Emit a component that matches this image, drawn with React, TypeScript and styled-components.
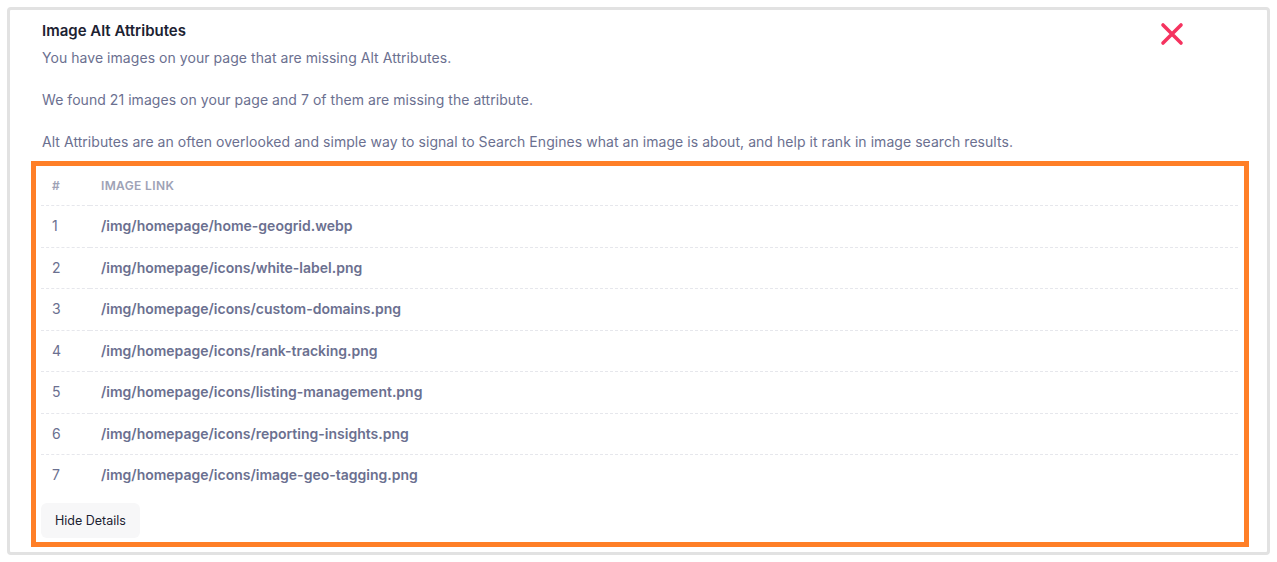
import React from "react";
import styled, { createGlobalStyle } from "styled-components";

const GlobalStyle = createGlobalStyle`
  * { box-sizing: border-box; }
  html, body { margin: 0; padding: 0; background: #ffffff; }
  body { font-family: Inter, "Noto Sans", sans-serif; -webkit-font-smoothing: antialiased; }
`;

const Page = styled.div`
  padding: 7px;
  width: 1277px;
`;

const Card = styled.div`
  width: 1263px;
  height: 548px;
  border: 3px solid #e2e2e2;
  border-radius: 4px;
  background: #ffffff;
  padding: 11px 18px 5px 21px;
  display: flex;
  flex-direction: column;
`;

const Header = styled.div`
  display: flex;
  align-items: flex-start;
  justify-content: space-between;
  padding: 0 65px 0 11px;
`;

const HeaderText = styled.div`
  display: flex;
  flex-direction: column;
`;

const Title = styled.h3`
  margin: 0;
  font-size: 15px;
  line-height: 20px;
  font-weight: 600;
  color: #1c2232;
`;

const Description = styled.p`
  margin: 6px 0 0 0;
  font-size: 14px;
  line-height: 21px;
  font-weight: 400;
  letter-spacing: 0.05px;
  color: #6b7090;
`;

const CloseButton = styled.button`
  border: none;
  background: transparent;
  padding: 0;
  margin-top: 1px;
  width: 24px;
  height: 24px;
  cursor: pointer;
  display: flex;
  align-items: center;
  justify-content: center;
`;

const Highlight = styled.div`
  margin-top: 9px;
  flex: 1;
  border: 5px solid #ff7f27;
  padding: 0 6px 3px 5px;
  display: flex;
  flex-direction: column;
`;

const Table = styled.table`
  width: 100%;
  border-collapse: collapse;
`;

const HeadCell = styled.th<{ $w?: number }>`
  text-align: left;
  font-size: 12px;
  line-height: 15px;
  font-weight: 600;
  letter-spacing: 0.03em;
  text-transform: uppercase;
  color: #9ea2b6;
  padding: 12px 11px;
  width: ${(p) => (p.$w ? `${p.$w}px` : "auto")};
  border-bottom: 1px dashed #e6e7ec;
`;

const Row = styled.tr`
  & > td {
    border-bottom: 1px dashed #e6e7ec;
  }
  &:last-child > td {
    border-bottom: none;
  }
`;

const Cell = styled.td<{ $bold?: boolean }>`
  font-size: 14px;
  line-height: 16.5px;
  font-weight: ${(p) => (p.$bold ? 600 : 400)};
  color: #6b7090;
  padding: 12px 11px;
`;

const Footer = styled.div`
  margin-top: 7px;
  display: flex;
`;

const HideButton = styled.button`
  border: none;
  background: #f7f7f8;
  border-radius: 6px;
  height: 35px;
  padding: 0 14px;
  font-family: Inter, "Noto Sans", sans-serif;
  font-size: 12.5px;
  font-weight: 400;
  color: #1c2232;
  cursor: pointer;
`;

const links = [
  "/img/homepage/home-geogrid.webp",
  "/img/homepage/icons/white-label.png",
  "/img/homepage/icons/custom-domains.png",
  "/img/homepage/icons/rank-tracking.png",
  "/img/homepage/icons/listing-management.png",
  "/img/homepage/icons/reporting-insights.png",
  "/img/homepage/icons/image-geo-tagging.png",
];

export default function App() {
  return (
    <>
      <GlobalStyle />
      <Page>
        <Card>
          <Header>
            <HeaderText>
              <Title>Image Alt Attributes</Title>
              <Description>
                You have images on your page that are missing Alt Attributes.
                <br />
                <br />
                We found 21 images on your page and 7 of them are missing the attribute.
                <br />
                <br />
                Alt Attributes are an often overlooked and simple way to signal to Search Engines what an image is about, and help it rank in image search results.
              </Description>
            </HeaderText>
            <CloseButton aria-label="Close">
              <svg width="24" height="24" viewBox="0 0 24 24">
                <path
                  d="M3 3 L21 21 M21 3 L3 21"
                  stroke="#f5335f"
                  strokeWidth="3.6"
                  strokeLinecap="round"
                  fill="none"
                />
              </svg>
            </CloseButton>
          </Header>
          <Highlight>
            <Table>
              <thead>
                <tr>
                  <HeadCell $w={49}>#</HeadCell>
                  <HeadCell>Image Link</HeadCell>
                </tr>
              </thead>
              <tbody>
                {links.map((l, i) => (
                  <Row key={l}>
                    <Cell>{i + 1}</Cell>
                    <Cell $bold>{l}</Cell>
                  </Row>
                ))}
              </tbody>
            </Table>
            <Footer>
              <HideButton>Hide Details</HideButton>
            </Footer>
          </Highlight>
        </Card>
      </Page>
    </>
  );
}
